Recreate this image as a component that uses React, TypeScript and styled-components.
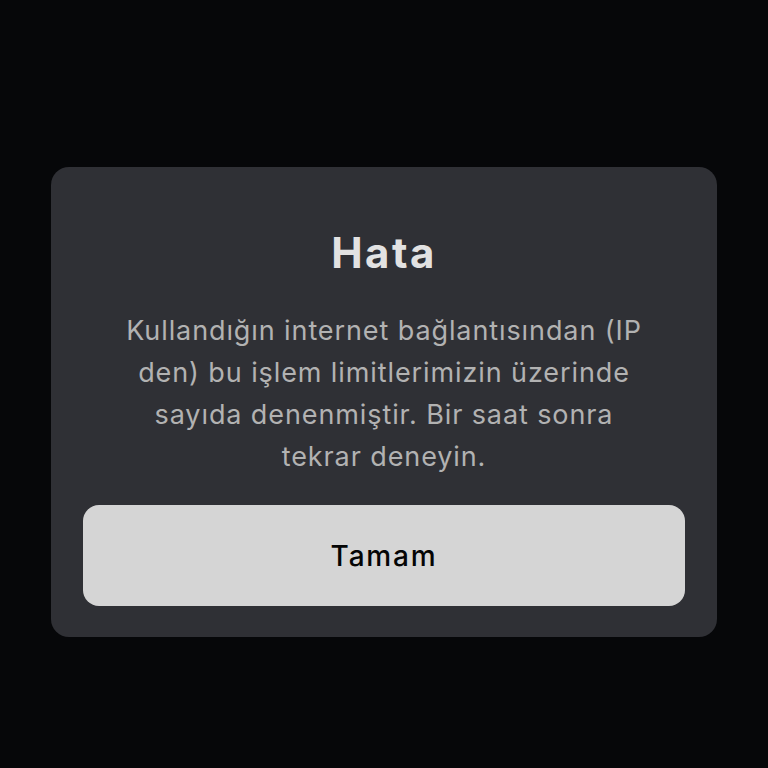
import React from "react";
import styled, { createGlobalStyle } from "styled-components";

const GlobalStyle = createGlobalStyle`
  html, body {
    margin: 0;
    padding: 0;
    background: #060709;
    font-family: Inter, "Noto Sans", sans-serif;
  }
`;

const Screen = styled.div`
  min-height: 768px;
  display: flex;
  justify-content: center;
  align-items: flex-start;
  padding-top: 167px;
  box-sizing: border-box;
`;

const Dialog = styled.div`
  width: 666px;
  box-sizing: border-box;
  background: #2f3035;
  border-radius: 18px;
  padding: 61px 32px 31px;
  display: flex;
  flex-direction: column;
  align-items: center;
`;

const Title = styled.h2`
  margin: 0;
  font-size: 42px;
  line-height: 50px;
  font-weight: 700;
  color: #e2e2e2;
  letter-spacing: 2.5px;
`;

const Message = styled.p`
  margin: 32px 0 0;
  font-size: 27px;
  line-height: 42px;
  font-weight: 400;
  color: #b2b2b2;
  text-align: center;
  letter-spacing: 0.9px;
  white-space: nowrap;
`;

const Button = styled.button`
  margin-top: 27px;
  width: 100%;
  height: 101px;
  border: none;
  border-radius: 16px;
  background: #d5d5d5;
  color: #050505;
  font-family: inherit;
  font-size: 28px;
  font-weight: 500;
  letter-spacing: 1.8px;
  cursor: pointer;
`;

export default function App() {
  return (
    <>
      <GlobalStyle />
      <Screen>
        <Dialog>
          <Title>Hata</Title>
          <Message>
            Kullandığın internet bağlantısından (IP
            <br />
            den) bu işlem limitlerimizin üzerinde
            <br />
            sayıda denenmiştir. Bir saat sonra
            <br />
            tekrar deneyin.
          </Message>
          <Button>Tamam</Button>
        </Dialog>
      </Screen>
    </>
  );
}
